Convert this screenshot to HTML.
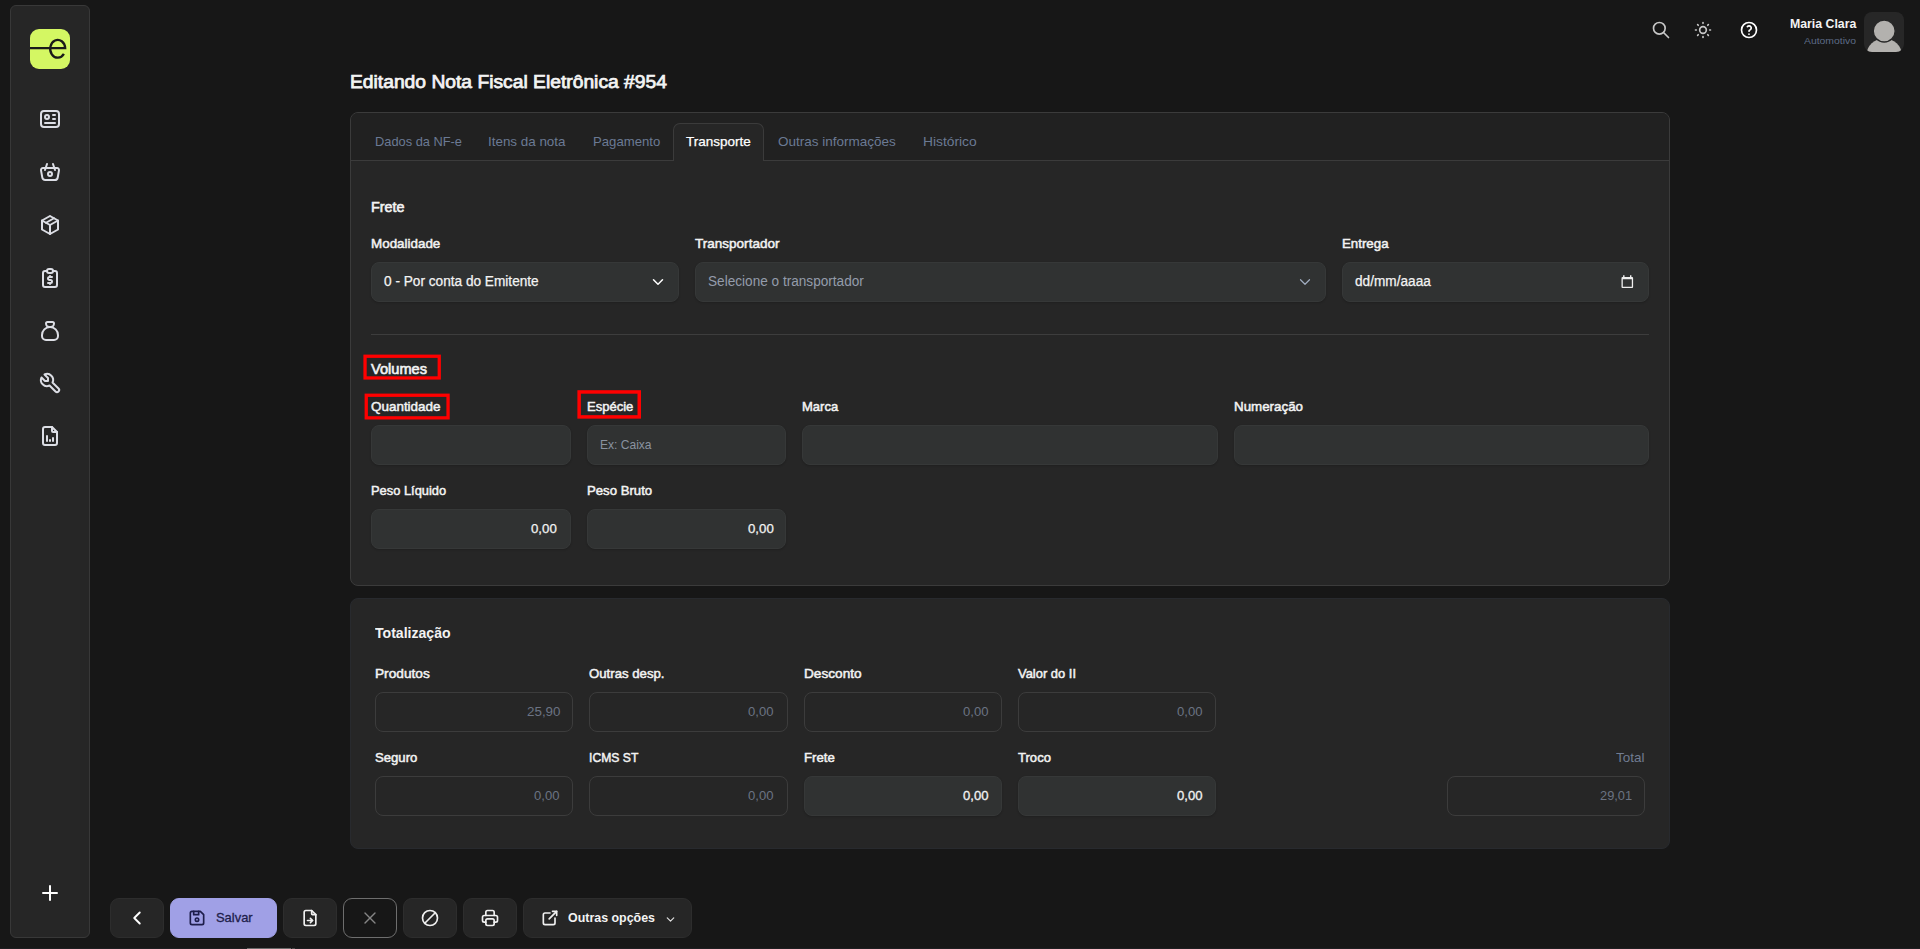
<!DOCTYPE html>
<html lang="pt-BR">
<head>
<meta charset="utf-8">
<title>Editando Nota Fiscal Eletrônica #954</title>
<style>
*{box-sizing:border-box;margin:0;padding:0}
html,body{width:1920px;height:949px;overflow:hidden;background:#171717}
body{position:relative;font-family:"Liberation Sans",sans-serif;color:#f3f3f3}
.a{position:absolute}
.t{position:absolute;white-space:nowrap;line-height:20px;transform-origin:0 50%}
.side{left:10px;top:5px;width:80px;height:933px;background:#262626;border:1px solid #383838;border-radius:6px}
.logo{left:30px;top:29px;width:40px;height:40px;background:#d4f763;border-radius:9px;overflow:hidden}
.ic{position:absolute;fill:none;stroke:#e8e8ec;stroke-width:2;stroke-linecap:round;stroke-linejoin:round}
.card1{left:350px;top:112px;width:1320px;height:474px;background:#262626;border:1px solid #3b3b3b;border-radius:8px}
.hdr{left:351px;top:113px;width:1318px;height:47px;background:#212121;border-radius:7px 7px 0 0}
.hline{left:351px;top:160px;width:1318px;height:1px;background:#3b3b3b}
.tab{left:673px;top:123px;width:91px;height:38px;background:#262626;border:1px solid #3b3b3b;border-bottom:none;border-radius:7px 7px 0 0}
.f{position:absolute;height:40px;background:#303232;border:1px solid #363838;border-radius:8px;box-shadow:0 1px 2px rgba(0,0,0,.18)}
.d{position:absolute;height:40px;border:1px solid #3c3c3c;border-radius:8px}
.sep{left:371px;top:334px;width:1278px;height:1px;background:#3d3d3d}
.red{position:absolute;border:3px solid #f00}
.card2{left:350px;top:598px;width:1320px;height:251px;background:#262626;border:1px solid #282a2e;border-radius:8px}
.btn{position:absolute;top:898px;height:40px;background:#262626;border:1px solid #2d2d2d;border-radius:9px}
.av{left:1864px;top:12px;width:40px;height:40px;background:#272727;border-radius:8px;overflow:hidden}
</style>
</head>
<body>
<!-- sidebar -->
<div class="a side"></div>
<div class="a logo"><svg width="40" height="40" viewBox="0 0 40 40"><path d="M0 19.2H35.2A7.5 8.9 0 1 0 33.9 24.8" stroke="#1a1a1a" stroke-width="2.3" fill="none"/></svg></div>
<!-- header user -->
<div class="a av"><svg width="40" height="40" viewBox="0 0 40 40"><ellipse cx="20.2" cy="42.6" rx="17.6" ry="16.2" fill="#b3b1ae"/><circle cx="20.2" cy="19" r="11" fill="#b3b1ae" stroke="#272727" stroke-width="1.4"/></svg></div>
<!-- cards -->
<div class="a card1"></div>
<div class="a hdr"></div>
<div class="a hline"></div>
<div class="a tab"></div>
<div class="f" style="left:371px;top:262px;width:308px"></div>
<div class="f" style="left:695px;top:262px;width:631px"></div>
<div class="f" style="left:1342px;top:262px;width:307px"></div>
<div class="a sep"></div>
<svg class="a" style="left:360px;top:350px" width="290" height="75" viewBox="360 350 290 75" fill="none" stroke="#ff0000"><rect x="365.05" y="356.25" width="74.2" height="21.7" stroke-width="3.3"/><rect x="366.25" y="395.25" width="81.8" height="22.6" stroke-width="3.3"/><rect x="579.15" y="391.95" width="60.1" height="24.95" stroke-width="3.5"/></svg>
<div class="f" style="left:371px;top:425px;width:200px"></div>
<div class="f" style="left:587px;top:425px;width:199px"></div>
<div class="f" style="left:802px;top:425px;width:416px"></div>
<div class="f" style="left:1234px;top:425px;width:415px"></div>
<div class="f" style="left:371px;top:509px;width:200px"></div>
<div class="f" style="left:587px;top:509px;width:199px"></div>
<div class="a card2"></div>
<div class="d" style="left:375px;top:692px;width:198px"></div>
<div class="d" style="left:589px;top:692px;width:199px"></div>
<div class="d" style="left:804px;top:692px;width:198px"></div>
<div class="d" style="left:1018px;top:692px;width:198px"></div>
<div class="d" style="left:375px;top:776px;width:198px"></div>
<div class="d" style="left:589px;top:776px;width:199px"></div>
<div class="f" style="left:804px;top:776px;width:198px"></div>
<div class="f" style="left:1018px;top:776px;width:198px"></div>
<div class="d" style="left:1447px;top:776px;width:198px"></div>
<!-- bottom bar -->
<div class="btn" style="left:110px;width:54px"></div>
<div class="btn" style="left:170px;width:107px;background:#a0a0e6;border-color:#a0a0e6"></div>
<div class="btn" style="left:283px;width:54px"></div>
<div class="btn" style="left:343px;width:54px;background:#171717;border-color:#6e6e6e"></div>
<div class="btn" style="left:403px;width:54px"></div>
<div class="btn" style="left:463px;width:54px"></div>
<div class="btn" style="left:523px;width:169px"></div>
<div class="a" style="left:0;top:948px;width:1920px;height:1px;background:#1e1e21"></div>
<div class="a" style="left:247px;top:948px;width:44px;height:1px;background:#6a6a6a"></div>
<div class="a" style="left:292px;top:948px;width:3px;height:1px;background:#4a4a4a"></div>
<div class="t" style="left:349.90px;top:72.00px;font-size:18px;font-weight:400;color:#f3f3f3;transform:scaleX(1.0701);-webkit-text-stroke:0.75px #f3f3f3;">Editando Nota Fiscal Eletrônica #954</div>
<div class="t" style="left:374.70px;top:132.00px;font-size:13px;font-weight:400;color:#6b7a94;transform:scaleX(0.9869);">Dados da NF-e</div>
<div class="t" style="left:488.30px;top:132.00px;font-size:13px;font-weight:400;color:#6b7a94;transform:scaleX(1.0309);">Itens da nota</div>
<div class="t" style="left:592.80px;top:132.00px;font-size:13px;font-weight:400;color:#6b7a94;transform:scaleX(1.0106);">Pagamento</div>
<div class="t" style="left:686.40px;top:132.00px;font-size:13px;font-weight:400;color:#ffffff;transform:scaleX(1.0373);-webkit-text-stroke:0.25px #fff;">Transporte</div>
<div class="t" style="left:777.80px;top:132.00px;font-size:13px;font-weight:400;color:#6b7a94;transform:scaleX(1.0376);">Outras informações</div>
<div class="t" style="left:922.50px;top:132.00px;font-size:13px;font-weight:400;color:#6b7a94;transform:scaleX(1.0619);">Histórico</div>
<div class="t" style="left:370.60px;top:197.00px;font-size:14px;font-weight:400;color:#f3f3f3;transform:scaleX(1.0252);-webkit-text-stroke:0.6px #f3f3f3;">Frete</div>
<div class="t" style="left:370.80px;top:234.00px;font-size:13.6px;font-weight:400;color:#f3f3f3;transform:scaleX(0.9863);-webkit-text-stroke:0.5px #f3f3f3;">Modalidade</div>
<div class="t" style="left:695.00px;top:234.00px;font-size:13.6px;font-weight:400;color:#f3f3f3;transform:scaleX(0.9951);-webkit-text-stroke:0.5px #f3f3f3;">Transportador</div>
<div class="t" style="left:1341.50px;top:234.00px;font-size:13.6px;font-weight:400;color:#f3f3f3;transform:scaleX(0.9771);-webkit-text-stroke:0.5px #f3f3f3;">Entrega</div>
<div class="t" style="left:384.30px;top:271.00px;font-size:14px;font-weight:400;color:#f3f3f3;transform:scaleX(0.9745);-webkit-text-stroke:0.25px;">0 - Por conta do Emitente</div>
<div class="t" style="left:707.90px;top:271.00px;font-size:14px;font-weight:400;color:#949cab;transform:scaleX(0.9721);">Selecione o transportador</div>
<div class="t" style="left:1354.60px;top:271.00px;font-size:14px;font-weight:400;color:#f3f3f3;transform:scaleX(0.9740);-webkit-text-stroke:0.25px;">dd/mm/aaaa</div>
<div class="t" style="left:370.60px;top:359.00px;font-size:14px;font-weight:400;color:#f3f3f3;transform:scaleX(1.0430);-webkit-text-stroke:0.6px #f3f3f3;">Volumes</div>
<div class="t" style="left:370.80px;top:397.00px;font-size:13.6px;font-weight:400;color:#f3f3f3;transform:scaleX(0.9890);-webkit-text-stroke:0.5px #f3f3f3;">Quantidade</div>
<div class="t" style="left:586.85px;top:397.00px;font-size:13.6px;font-weight:400;color:#f3f3f3;transform:scaleX(0.9589);-webkit-text-stroke:0.5px #f3f3f3;">Espécie</div>
<div class="t" style="left:802.30px;top:397.00px;font-size:13.6px;font-weight:400;color:#f3f3f3;transform:scaleX(0.9565);-webkit-text-stroke:0.5px #f3f3f3;">Marca</div>
<div class="t" style="left:1233.90px;top:397.00px;font-size:13.6px;font-weight:400;color:#f3f3f3;transform:scaleX(0.9822);-webkit-text-stroke:0.5px #f3f3f3;">Numeração</div>
<div class="t" style="left:600.40px;top:435.00px;font-size:13.4px;font-weight:400;color:#8a92a0;transform:scaleX(0.8997);">Ex: Caixa</div>
<div class="t" style="left:371.00px;top:481.00px;font-size:13.6px;font-weight:400;color:#f3f3f3;transform:scaleX(0.9465);-webkit-text-stroke:0.5px #f3f3f3;">Peso Líquido</div>
<div class="t" style="left:586.60px;top:481.00px;font-size:13.6px;font-weight:400;color:#f3f3f3;transform:scaleX(0.9684);-webkit-text-stroke:0.5px #f3f3f3;">Peso Bruto</div>
<div class="t" style="left:531.20px;top:519.00px;font-size:13.4px;font-weight:400;color:#f3f3f3;transform:scaleX(0.9894);-webkit-text-stroke:0.25px;">0,00</div>
<div class="t" style="left:747.50px;top:519.00px;font-size:13.4px;font-weight:400;color:#f3f3f3;transform:scaleX(0.9894);-webkit-text-stroke:0.25px;">0,00</div>
<div class="t" style="left:374.80px;top:623.00px;font-size:14px;font-weight:700;color:#f3f3f3;transform:scaleX(1.0052);">Totalização</div>
<div class="t" style="left:375.00px;top:664.00px;font-size:13.6px;font-weight:400;color:#f3f3f3;transform:scaleX(1.0059);-webkit-text-stroke:0.5px #f3f3f3;">Produtos</div>
<div class="t" style="left:589.00px;top:664.00px;font-size:13.6px;font-weight:400;color:#f3f3f3;transform:scaleX(0.9703);-webkit-text-stroke:0.5px #f3f3f3;">Outras desp.</div>
<div class="t" style="left:804.10px;top:664.00px;font-size:13.6px;font-weight:400;color:#f3f3f3;transform:scaleX(1.0033);-webkit-text-stroke:0.5px #f3f3f3;">Desconto</div>
<div class="t" style="left:1018.10px;top:664.00px;font-size:13.6px;font-weight:400;color:#f3f3f3;transform:scaleX(0.9519);-webkit-text-stroke:0.5px #f3f3f3;">Valor do II</div>
<div class="t" style="left:526.50px;top:702.00px;font-size:13.4px;font-weight:400;color:#6b7383;transform:scaleX(0.9992);">25,90</div>
<div class="t" style="left:748.30px;top:702.00px;font-size:13.4px;font-weight:400;color:#6b7383;transform:scaleX(0.9779);">0,00</div>
<div class="t" style="left:963.00px;top:702.00px;font-size:13.4px;font-weight:400;color:#6b7383;transform:scaleX(0.9779);">0,00</div>
<div class="t" style="left:1177.30px;top:702.00px;font-size:13.4px;font-weight:400;color:#6b7383;transform:scaleX(0.9779);">0,00</div>
<div class="t" style="left:374.80px;top:748.00px;font-size:13.6px;font-weight:400;color:#f3f3f3;transform:scaleX(0.9656);-webkit-text-stroke:0.5px #f3f3f3;">Seguro</div>
<div class="t" style="left:589.30px;top:748.00px;font-size:13.6px;font-weight:400;color:#f3f3f3;transform:scaleX(0.8946);-webkit-text-stroke:0.5px #f3f3f3;">ICMS ST</div>
<div class="t" style="left:804.10px;top:748.00px;font-size:13.6px;font-weight:400;color:#f3f3f3;transform:scaleX(0.9719);-webkit-text-stroke:0.5px #f3f3f3;">Frete</div>
<div class="t" style="left:1018.10px;top:748.00px;font-size:13.6px;font-weight:400;color:#f3f3f3;transform:scaleX(0.9618);-webkit-text-stroke:0.5px #f3f3f3;">Troco</div>
<div class="t" style="left:1616.20px;top:748.00px;font-size:13.5px;font-weight:400;color:#717c92;transform:scaleX(0.9961);">Total</div>
<div class="t" style="left:534.20px;top:786.00px;font-size:13.4px;font-weight:400;color:#6b7383;transform:scaleX(0.9779);">0,00</div>
<div class="t" style="left:748.30px;top:786.00px;font-size:13.4px;font-weight:400;color:#6b7383;transform:scaleX(0.9779);">0,00</div>
<div class="t" style="left:963.00px;top:786.00px;font-size:13.4px;font-weight:400;color:#f3f3f3;transform:scaleX(0.9779);-webkit-text-stroke:0.3px;">0,00</div>
<div class="t" style="left:1177.30px;top:786.00px;font-size:13.4px;font-weight:400;color:#f3f3f3;transform:scaleX(0.9779);-webkit-text-stroke:0.3px;">0,00</div>
<div class="t" style="left:1600.00px;top:786.00px;font-size:13.4px;font-weight:400;color:#6b7383;transform:scaleX(0.9574);">29,01</div>
<div class="t" style="left:215.60px;top:908.00px;font-size:13.3px;font-weight:400;color:#1e1e4b;transform:scaleX(0.9720);-webkit-text-stroke:0.3px #1e1e4b;">Salvar</div>
<div class="t" style="left:568.00px;top:908.00px;font-size:13.5px;font-weight:700;color:#f3f3f3;transform:scaleX(0.9204);">Outras opções</div>
<div class="t" style="left:1789.50px;top:14.00px;font-size:13.2px;font-weight:700;color:#f3f3f3;transform:scaleX(0.9319);">Maria Clara</div>
<div class="t" style="left:1804.00px;top:31.00px;font-size:9.6px;font-weight:400;color:#5d6b86;transform:scaleX(1.0829);">Automotivo</div>
<svg class="ic" style="left:38.00px;top:107.00px;stroke:#dcdee5;stroke-width:2" width="24" height="24" viewBox="0 0 24 24"><path d="M3 4m0 3a3 3 0 0 1 3 -3h12a3 3 0 0 1 3 3v10a3 3 0 0 1 -3 3h-12a3 3 0 0 1 -3 -3z"/><path d="M9 10m-2 0a2 2 0 1 0 4 0a2 2 0 1 0 -4 0"/><path d="M15 8l2 0"/><path d="M15 12l2 0"/><path d="M7 16l10 0"/></svg>
<svg class="ic" style="left:38.00px;top:160.00px;stroke:#dcdee5;stroke-width:2" width="24" height="24" viewBox="0 0 24 24"><path d="M10 14a2 2 0 1 0 4 0a2 2 0 0 0 -4 0"/><path d="M5.001 8h13.999a2 2 0 0 1 1.977 2.304l-1.255 7.152a3 3 0 0 1 -2.966 2.544h-9.512a3 3 0 0 1 -2.965 -2.544l-1.255 -7.152a2 2 0 0 1 1.977 -2.304z"/><path d="M17 10l-2 -6"/><path d="M7 10l2 -6"/></svg>
<svg class="ic" style="left:38.00px;top:213.00px;stroke:#dcdee5;stroke-width:2" width="24" height="24" viewBox="0 0 24 24"><path d="M12 3l8 4.500l0 9l-8 4.500l-8 -4.500l0 -9l8 -4.500"/><path d="M12 12l8 -4.500"/><path d="M12 12l0 9"/><path d="M12 12l-8 -4.500"/><path d="M16 5.250l-8 4.500"/></svg>
<svg class="ic" style="left:38.00px;top:266.00px;stroke:#dcdee5;stroke-width:2" width="24" height="24" viewBox="0 0 24 24"><path d="M9 5h-2a2 2 0 0 0 -2 2v12a2 2 0 0 0 2 2h10a2 2 0 0 0 2 -2v-12a2 2 0 0 0 -2 -2h-2"/><path d="M9 3m0 2a2 2 0 0 1 2 -2h2a2 2 0 0 1 2 2v0a2 2 0 0 1 -2 2h-2a2 2 0 0 1 -2 -2z"/><path d="M14 11h-2.500a1.500 1.500 0 0 0 0 3h1a1.500 1.500 0 0 1 0 3h-2.500"/><path d="M12 17v1m0 -8v1"/></svg>
<svg class="ic" style="left:38.00px;top:319.00px;stroke:#dcdee5;stroke-width:2" width="24" height="24" viewBox="0 0 24 24"><path d="M9.500 3h5a1.500 1.500 0 0 1 1.500 1.500a3.500 3.500 0 0 1 -3.500 3.500h-1a3.500 3.500 0 0 1 -3.500 -3.500a1.500 1.500 0 0 1 1.500 -1.500z"/><path d="M4 17v-1a8 8 0 1 1 16 0v1a4 4 0 0 1 -4 4h-8a4 4 0 0 1 -4 -4z"/></svg>
<svg class="ic" style="left:38.00px;top:371.00px;stroke:#dcdee5;stroke-width:2" width="24" height="24" viewBox="0 0 24 24"><path d="M7 10h3v-3l-3.500 -3.500a6 6 0 0 1 8 8l6 6a2 2 0 0 1 -3 3l-6 -6a6 6 0 0 1 -8 -8l3.500 3.500"/></svg>
<svg class="ic" style="left:38.00px;top:424.00px;stroke:#dcdee5;stroke-width:2" width="24" height="24" viewBox="0 0 24 24"><path d="M14 3v4a1 1 0 0 0 1 1h4"/><path d="M17 21h-10a2 2 0 0 1 -2 -2v-14a2 2 0 0 1 2 -2h7l5 5v11a2 2 0 0 1 -2 2z"/><path d="M9 17l0 -5"/><path d="M12 17l0 -1"/><path d="M15 17l0 -3"/></svg>
<svg class="ic" style="left:38.00px;top:881.20px;stroke:#ffffff;stroke-width:2" width="24" height="24" viewBox="0 0 24 24"><path d="M12 5l0 14"/><path d="M5 12l14 0"/></svg>
<svg class="ic" style="left:1651.00px;top:20.00px;stroke:#c8c8c8;stroke-width:2" width="20" height="20" viewBox="0 0 24 24"><path d="M10 10m-7 0a7 7 0 1 0 14 0a7 7 0 1 0 -14 0"/><path d="M21 21l-6 -6"/></svg>
<svg class="ic" style="left:1693.00px;top:20.00px;stroke:#c8c8c8;stroke-width:2" width="20" height="20" viewBox="0 0 24 24"><path d="M12 12m-4 0a4 4 0 1 0 8 0a4 4 0 1 0 -8 0"/><path d="M3 12h1m8 -9v1m8 8h1m-9 8v1m-6.400 -15.400l.7 .7m12.100 -.7l-.7 .7m0 11.400l.7 .7m-12.100 -.7l-.7 .7"/></svg>
<svg class="ic" style="left:1739.20px;top:20.00px;stroke:#ffffff;stroke-width:2" width="20" height="20" viewBox="0 0 24 24"><path d="M12 12m-9 0a9 9 0 1 0 18 0a9 9 0 1 0 -18 0"/><path d="M12 17l0 .01"/><path d="M12 13.500a1.500 1.500 0 0 1 1 -1.500a2.600 2.600 0 1 0 -3 -4"/></svg>
<svg class="ic" style="left:648.50px;top:273.00px;stroke:#ffffff;stroke-width:2" width="18" height="18" viewBox="0 0 24 24"><path d="M6 9l6 6l6 -6"/></svg>
<svg class="ic" style="left:1296.00px;top:273.00px;stroke:#a0adc0;stroke-width:1.6" width="18" height="18" viewBox="0 0 24 24"><path d="M6 9l6 6l6 -6"/></svg>
<svg class="ic" style="left:125.70px;top:906.80px;stroke:#ffffff;stroke-width:2.1" width="22" height="22" viewBox="0 0 24 24"><path d="M15 6l-6 6l6 6"/></svg>
<svg class="ic" style="left:187.00px;top:908.00px;stroke:#1e1e4b;stroke-width:2" width="20" height="20" viewBox="0 0 24 24"><path d="M6 4h10l4 4v10a2 2 0 0 1 -2 2h-12a2 2 0 0 1 -2 -2v-12a2 2 0 0 1 2 -2"/><path d="M12 14m-2 0a2 2 0 1 0 4 0a2 2 0 1 0 -4 0"/><path d="M14 4l0 4l-6 0l0 -4"/></svg>
<svg class="ic" style="left:300.00px;top:908.00px;stroke:#f0f0f0;stroke-width:2" width="20" height="20" viewBox="0 0 24 24"><path d="M14 3v4a1 1 0 0 0 1 1h4"/><path d="M17 21h-10a2 2 0 0 1 -2 -2v-14a2 2 0 0 1 2 -2h7l5 5v11a2 2 0 0 1 -2 2z"/><path d="M9 15h6"/><path d="M12.500 17.500l2.500 -2.500l-2.500 -2.500"/></svg>
<svg class="ic" style="left:360.00px;top:908.00px;stroke:#858585;stroke-width:1.6" width="20" height="20" viewBox="0 0 24 24"><path d="M18 6l-12 12"/><path d="M6 6l12 12"/></svg>
<svg class="ic" style="left:420.00px;top:908.00px;stroke:#f0f0f0;stroke-width:2" width="20" height="20" viewBox="0 0 24 24"><path d="M12 12m-9 0a9 9 0 1 0 18 0a9 9 0 1 0 -18 0"/><path d="M18.300 5.700l-12.600 12.600"/></svg>
<svg class="ic" style="left:480.00px;top:908.00px;stroke:#f0f0f0;stroke-width:2" width="20" height="20" viewBox="0 0 24 24"><path d="M17 17h2a2 2 0 0 0 2 -2v-4a2 2 0 0 0 -2 -2h-14a2 2 0 0 0 -2 2v4a2 2 0 0 0 2 2h2"/><path d="M17 9v-4a2 2 0 0 0 -2 -2h-6a2 2 0 0 0 -2 2v4"/><path d="M7 13m0 2a2 2 0 0 1 2 -2h6a2 2 0 0 1 2 2v4a2 2 0 0 1 -2 2h-6a2 2 0 0 1 -2 -2z"/></svg>
<svg class="ic" style="left:540.00px;top:908.00px;stroke:#f0f0f0;stroke-width:2" width="20" height="20" viewBox="0 0 24 24"><path d="M12 6h-6a2 2 0 0 0 -2 2v10a2 2 0 0 0 2 2h10a2 2 0 0 0 2 -2v-6"/><path d="M11 13l9 -9"/><path d="M15 4h5v5"/></svg>
<svg class="ic" style="left:664.00px;top:912.60px;stroke:#e0e0e0;stroke-width:2.2" width="13" height="13" viewBox="0 0 24 24"><path d="M6 9l6 6l6 -6"/></svg>
<svg class="a" style="left:1620px;top:274px" width="14" height="15" viewBox="0 0 14 15"><path d="M3.1 1.2h1.4v1.8h5.5v-1.8h1.4v1.8h0.7a1 1 0 0 1 1 1v9.1a1 1 0 0 1-1 1h-9.6a1 1 0 0 1-1-1v-9.1a1 1 0 0 1 1-1h0.6zM2.8 5.3v7.5h9v-7.5z" fill="#efefef" fill-rule="evenodd"/></svg>
</body>
</html>
